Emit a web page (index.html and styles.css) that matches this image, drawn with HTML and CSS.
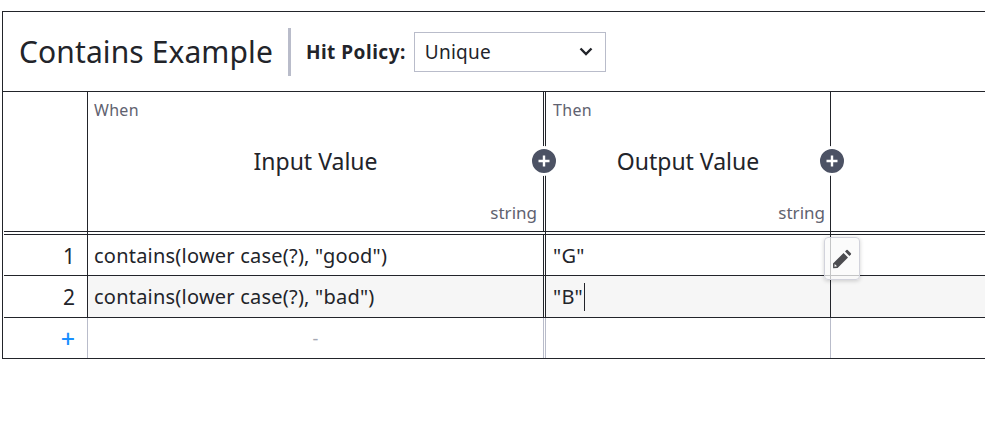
FILE: index.html
```html
<!DOCTYPE html>
<html lang="en">
<head>
<meta charset="utf-8">
<title>Contains Example</title>
<link rel="stylesheet" href="styles.css">
</head>
<body>
<div class="dmn">
  <header class="top">
    <h1 class="name">Contains Example</h1>
    <div class="policy">
      <label class="policy-label">Hit Policy:</label>
      <div class="select">
        <span>Unique</span>
        <svg class="chev" width="14" height="9" viewBox="0 0 14 9"><path d="M1.5 1.5 7 7l5.5-5.5" fill="none" stroke="#22242a" stroke-width="2.4"/></svg>
      </div>
    </div>
  </header>
  <div class="row head">
    <div class="cell idx"></div>
    <div class="cell col-in hcell">
      <span class="kind">When</span>
      <span class="title">Input Value</span>
      <span class="type">string</span>
      <span class="add add-a"><svg width="14" height="14" viewBox="0 0 14 14"><path d="M7 1.5v11M1.5 7h11" stroke="#fff" stroke-width="2.4"/></svg></span>
    </div>
    <div class="cell col-out hcell">
      <span class="kind">Then</span>
      <span class="title">Output Value</span>
      <span class="type">string</span>
      <span class="add add-b"><svg width="14" height="14" viewBox="0 0 14 14"><path d="M7 1.5v11M1.5 7h11" stroke="#fff" stroke-width="2.4"/></svg></span>
    </div>
    <div class="cell col-rest"></div>
  </div>
  <div class="row body first">
    <div class="cell idx num">1</div>
    <div class="cell col-in text">contains(lower case(?), "good")</div>
    <div class="cell col-out text">"G"
      <button class="edit"><svg width="20" height="20" viewBox="0 0 18 18"><path d="M10.4 3.6 14.4 7.6 5 17 1 17.4 .9 13.1zM2.4 13.4 4.6 15.6 2.2 15.9z" fill="#4c4c50" fill-rule="evenodd"/><path d="M11.7 2.3 13 1a.8.8 0 0 1 1.1 0l2.9 2.9a.8.8 0 0 1 0 1.1l-1.3 1.3z" fill="#4c4c50"/></svg></button>
    </div>
    <div class="cell col-rest"></div>
  </div>
  <div class="row body shaded">
    <div class="cell idx num">2</div>
    <div class="cell col-in text">contains(lower case(?), "bad")</div>
    <div class="cell col-out text">"B"<span class="caret"></span></div>
    <div class="cell col-rest"></div>
  </div>
  <div class="row foot">
    <div class="cell idx plus">+</div>
    <div class="cell col-in dash">-</div>
    <div class="cell col-out"></div>
    <div class="cell col-rest"></div>
  </div>
</div>
</body>
</html>
```
FILE: styles.css
```css
* { box-sizing: border-box; }
html, body { margin: 0; height: 438px; overflow: hidden; background: #fff; }
body { padding: 11px 0 0 2px; font-family: "Noto Sans", sans-serif; color: #22242a; }
.dmn { width: 1100px; border: 1px solid #22242a; }
.top { display: flex; align-items: center; height: 80px; border-bottom: 1px solid #22242a; padding-left: 16px; }
.name { margin: 0; font-size: 30px; font-weight: 400; line-height: 48px; letter-spacing: 0.1px; height: 48px; padding-right: 15px; border-right: 3px solid #b9bcca; }
.policy { display: flex; align-items: center; gap: 8px; margin-left: 15px; }
.policy-label { font-size: 19px; font-weight: 700; letter-spacing: 0.5px; }
.select { width: 192px; height: 40px; border: 1px solid #b9bcca; display: flex; align-items: center; justify-content: space-between; padding: 0 12px 0 10px; font-size: 19px; letter-spacing: 0.25px; }
.row { display: grid; grid-template-columns: 83px 457px 286px 1fr; grid-template-rows: minmax(0, 1fr); margin-left: 1px; }
.cell { position: relative; border-left: 1px solid #22242a; }
.cell.idx { border-left: 0; }
.col-in { border-right: 1px solid #22242a; }
.col-out { margin-left: 1px; }
.head { height: 140px; border-bottom: 1px solid #22242a; }
.hcell { display: flex; flex-direction: column; }
.kind { font-size: 16px; line-height: 22px; padding: 7px 0 0 6px; color: #5f6270; letter-spacing: 0.3px; }
.col-out .kind { padding-left: 7px; }
.title { font-size: 23px; line-height: 30px; text-align: center; margin-top: 25px; }
.type { font-size: 17px; line-height: 22px; text-align: right; padding-right: 6px; margin-top: 26px; color: #5f6270; }
.col-out .type { padding-right: 5px; }
.add { position: absolute; top: 54px; width: 30px; height: 30px; border-radius: 50%; background: #4c5264; border: 3px solid #fff; display: flex; align-items: center; justify-content: center; z-index: 2; }
.add-a { right: -16px; }
.add-b { right: -17px; }
.body { height: 42px; border-bottom: 1px solid #22242a; }
.first { margin-top: 2px; height: 42px; border-top: 1px solid #22242a; }
.first .cell:not(.idx)::before { content: ""; position: absolute; top: -3px; left: -1px; width: 1px; height: 3px; background: #22242a; }
.first .col-out::before { left: -3px; }
.shaded .col-in, .shaded .col-out, .shaded .col-rest { background: #f6f6f6; }
.num { font-size: 21px; line-height: 42px; text-align: right; padding-right: 12px; }
.text { font-size: 20px; line-height: 42px; padding-left: 6px; letter-spacing: 0.22px; }
.col-out.text { padding-left: 7px; }
.caret { display: inline-block; width: 1px; height: 28px; background: #22242a; vertical-align: -7px; margin-left: 1px; }
.foot { height: 40px; }
.foot .cell { border-color: #b9bcca; }
.plus { font-size: 25px; font-weight: 500; line-height: 40px; text-align: right; padding-right: 12px; color: #1a8fff; }
.dash { font-size: 18px; line-height: 40px; text-align: center; color: #a5a8b4; }
.edit { position: absolute; top: 2px; right: -30px; z-index: 3; width: 36px; height: 43px; padding: 0; border: 1px solid #d2d3dc; border-radius: 4px; background: rgba(250,250,250,.75); box-shadow: 0 1px 4px rgba(0,0,0,.18); display: flex; align-items: center; justify-content: center; }
```
